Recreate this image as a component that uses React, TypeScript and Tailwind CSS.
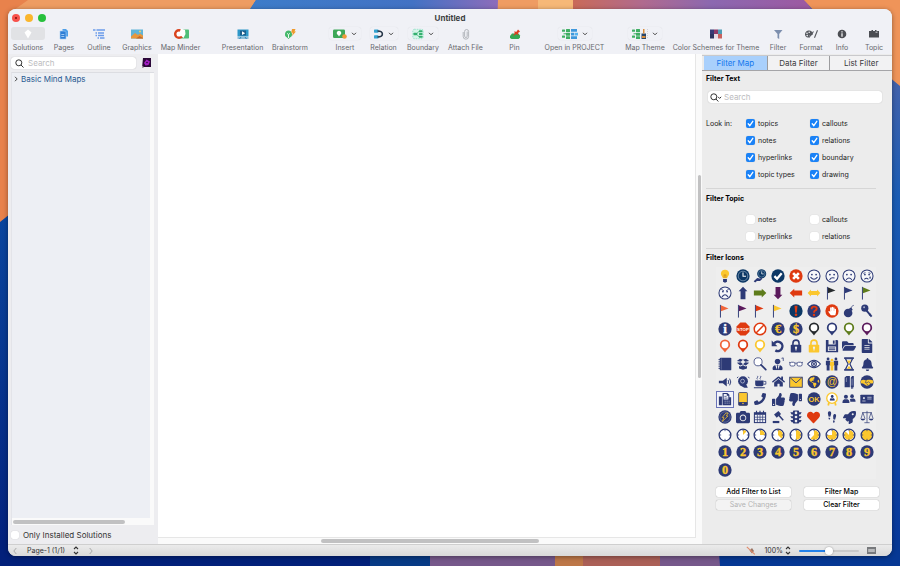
import React from "react";
import type { ReactNode } from "react";
import {
  FaHandPaper, FaFolderOpen, FaFileAlt, FaUserTie, FaBell, FaHome,
  FaGlobeAmericas, FaPhoneAlt, FaThumbsUp, FaThumbsDown,
  FaCamera, FaHeart, FaRocket, FaUser,
} from "react-icons/fa";

const NAVY = "#2d3a76";
const DEEP = "#0b3765";
const RED = "#df3a10";
const YELLOW = "#fbc72e";
const GREEN = "#5e7c1b";
const PURPLE = "#5b1a5c";
const ORANGE = "#f1653a";
const BLACK = "#262a2e";

function Glyph({ children }: { children: ReactNode }) {
  return (
    <svg viewBox="0 0 16 16" className="size-[14px]" fill="none" aria-hidden="true">
      {children}
    </svg>
  );
}

function Disc({ fill = NAVY, children }: { fill?: string; children: ReactNode }) {
  return (
    <Glyph>
      <circle cx="8" cy="8" r="7.6" fill={fill} />
      {children}
    </Glyph>
  );
}

function DiscText({ text, color = YELLOW, fill = NAVY, size = 13 }: { text: string; color?: string; fill?: string; size?: number }) {
  return (
    <Disc fill={fill}>
      <text x="8" y={8 + size * 0.34} textAnchor="middle" fontSize={size} fontWeight="700" fill={color} stroke={color} strokeWidth=".4" fontFamily="'Liberation Serif', serif">
        {text}
      </text>
    </Disc>
  );
}

function Face({ mouth, brows, tear = false }: { mouth: string; brows?: string; tear?: boolean }) {
  return (
    <Glyph>
      <circle cx="8" cy="8" r="6.900" fill="#f6f7fa" stroke={NAVY} strokeWidth="1.200" />
      <circle cx="5.600" cy="6.300" r="1" fill={NAVY} />
      <circle cx="10.400" cy="6.300" r="1" fill={NAVY} />
      <path d={mouth} stroke={NAVY} strokeWidth="1.200" strokeLinecap="round" />
      {brows && <path d={brows} stroke={NAVY} strokeWidth=".9" />}
      {tear && <path d="M11.500 8c1 1.500 1.300 3 0 3s-1-1.500 0-3z" fill={NAVY} />}
    </Glyph>
  );
}

function Flag({ color }: { color: string }) {
  return (
    <Glyph>
      <path d="M2.800 1v14.500" stroke={NAVY} strokeWidth="1.100" />
      <path d="M3.300 1.300 12 5 3.300 8.400z" fill={color} />
    </Glyph>
  );
}

function Pin({ color }: { color: string }) {
  return (
    <Glyph>
      <path d="M8 .6a5.900 5.900 0 0 0-5.900 5.900c0 3.700 3.900 5.200 5.900 9 2-3.800 5.900-5.300 5.900-9A5.900 5.900 0 0 0 8 .6z" fill={color} />
      <circle cx="8" cy="6.600" r="3.900" fill="#fff" />
    </Glyph>
  );
}

function Arrow({ color, angle }: { color: string; angle: number }) {
  return (
    <Glyph>
      <path d="M8 .8 13 6h-2.200v9H5.200V6H3z" fill={color} transform={`rotate(${angle} 8 8)`} />
    </Glyph>
  );
}

function Padlock({ color }: { color: string }) {
  return (
    <Glyph>
      <path d="M4.500 7V4.800a3.500 3.500 0 0 1 7 0V7" stroke={color} strokeWidth="1.800" />
      <rect x="2" y="6.500" width="12" height="9" rx=".8" fill={color} />
      <circle cx="8" cy="10" r="1.300" fill="#eee" />
      <path d="M7.400 10h1.200v3.200H7.400z" fill="#eee" />
    </Glyph>
  );
}

function Progress({ part }: { part: number }) {
  const a = part * 2 * Math.PI;
  const x = 8 + 5.6 * Math.sin(a);
  const y = 8 - 5.6 * Math.cos(a);
  return (
    <Glyph>
      <circle cx="8" cy="8" r="6.700" fill={part >= 1 ? YELLOW : "#fff"} stroke={NAVY} strokeWidth="1.500" />
      {part > 0 && part < 1 && <path d={`M8 8V2.400A5.600 5.600 0 ${part > 0.5 ? 1 : 0} 1 ${x} ${y}z`} fill={YELLOW} />}
      <path d="M8 2v1.600M8 12.400v1.600M2 8h1.600M12.400 8h1.600" stroke={NAVY} strokeWidth=".9" />
    </Glyph>
  );
}

function Clock() {
  return (
    <>
      <circle cx="8" cy="8" r="7.600" fill={DEEP} />
      <circle cx="8" cy="8" r="5.500" stroke="#9fb6cc" strokeWidth=".7" />
      <path d="M8 4v4.300h3.400" stroke="#fff" strokeWidth="1.200" />
    </>
  );
}

const filterIcons: [string, ReactNode][] = [
  ["Idea", <Glyph><path d="M8 .8a4.600 4.600 0 0 0-4.700 4.600c0 2.300 2 3.200 2.400 5.200h4.600c.4-2 2.400-2.900 2.400-5.200A4.600 4.600 0 0 0 8 .8z" fill={YELLOW} /><path d="M7 10.300V6.500L8 7.300l1-.8v3.800" stroke="#c27a14" strokeWidth=".7" /><path d="M5.800 11.300h4.400v2.700L9 15.400H7L5.800 14z" fill={NAVY} /></Glyph>],
  ["Clock", <Glyph><Clock /></Glyph>],
  ["Deadline", <Glyph><g transform="translate(4.500 0) scale(.68)"><Clock /></g><path d="m.8 14 4-3.800 3 .6 2.200-.8.500 1.500-2.500 2.300H4.500L2.500 15.500z" fill={NAVY} /></Glyph>],
  ["Done", <Disc fill={DEEP}><path d="m3.900 8.200 3 3 5.300-6.300" stroke="#fff" strokeWidth="2.600" /></Disc>],
  ["Cancelled", <Disc fill={RED}><path d="m4.700 4.700 6.600 6.600M11.300 4.700l-6.600 6.600" stroke="#fff" strokeWidth="3" /></Disc>],
  ["Happy", <Face mouth="M4.300 9.500q3.700 4.200 7.400 0" />],
  ["Doubtful", <Face mouth="M5.500 12q1.500-2.600 5-1.800" />],
  ["Sad", <Face mouth="M5 12q3-3.400 6 0" />],
  ["Tearful", <Face mouth="M5.300 11.500q2-1.800 4 0" brows="m3.800 5 2.500-.8M9.700 4.200l2.500.8" tear />],
  ["Angry", <Face mouth="M4.800 12.200q3.200-4.200 6.400 0" brows="m3.700 3.700 3 1.700M12.300 3.700l-3 1.700" />],
  ["Arrow up", <Arrow color={NAVY} angle={0} />],
  ["Arrow right", <Arrow color={GREEN} angle={90} />],
  ["Arrow down", <Arrow color={PURPLE} angle={180} />],
  ["Arrow left", <Arrow color={RED} angle={270} />],
  ["Arrow both ways", <Glyph><path d="M.8 8 4.500 4v1.600h7V4L15.200 8l-3.700 4v-1.600h-7V12z" fill={YELLOW} /></Glyph>],
  ["Black flag", <Flag color={BLACK} />],
  ["Blue flag", <Flag color={NAVY} />],
  ["Green flag", <Flag color={GREEN} />],
  ["Orange flag", <Flag color={ORANGE} />],
  ["Purple flag", <Flag color={PURPLE} />],
  ["Red flag", <Flag color={RED} />],
  ["Yellow flag", <Flag color={YELLOW} />],
  ["Important", <Disc fill={DEEP}><path d="M6.300 2h3.400L8.900 10H7.100z" fill={RED} /><circle cx="8" cy="12.300" r="1.500" fill={RED} /></Disc>],
  ["Question", <Disc><path d="M5.300 6C5 3 7 3 8 3c4.500 0 3.300 3.800 1.200 4.600Q8 8 8 10" stroke={RED} strokeWidth="2.200" /><circle cx="8" cy="12.600" r="1.400" fill={RED} /></Disc>],
  ["Halt", <Disc fill={RED}><FaHandPaper x="3.200" y="3" size={10} color="#fff" /></Disc>],
  ["Risk", <Glyph><circle cx="7" cy="10.300" r="4.900" fill={NAVY} /><path d="m8 5.200 2.500-1.200 1.700 2.500-1.200 1.500z" fill={NAVY} /><path d="M10.500 5c0-2 1-2.800 3-3.500" stroke={NAVY} strokeWidth=".8" /></Glyph>],
  ["Key", <Glyph><circle cx="5.500" cy="4.800" r="4.100" fill={NAVY} /><circle cx="4.700" cy="3.800" r="1.100" fill="#aab0ca" /><path d="m7.500 7.500 5.800 7" stroke={NAVY} strokeWidth="2.200" /><path d="m10.500 13 2-1.800" stroke={NAVY} strokeWidth="1.300" /></Glyph>],
  ["Info", <DiscText text="i" color="#fff" size={15} />],
  ["Stop", <Glyph><path d="M5 .6h6L15.400 5v6L11 15.400H5L.6 11V5z" fill={RED} /><text x="8" y="9.900" textAnchor="middle" fontSize="5" fontWeight="700" fill="#fff" fontFamily="'Liberation Sans', sans-serif">STOP</text></Glyph>],
  ["Forbidden", <Glyph><circle cx="8" cy="8" r="6.600" fill="#fff" stroke={RED} strokeWidth="1.700" /><path d="m3.500 12.500 9-9" stroke={RED} strokeWidth="1.700" /></Glyph>],
  ["Euro", <DiscText text="€" size={14} />],
  ["Dollar", <DiscText text="$" size={14} />],
  ["Black pin", <Pin color={BLACK} />],
  ["Blue pin", <Pin color={NAVY} />],
  ["Green pin", <Pin color={GREEN} />],
  ["Purple pin", <Pin color={PURPLE} />],
  ["Orange pin", <Pin color={ORANGE} />],
  ["Red pin", <Pin color={RED} />],
  ["Yellow pin", <Pin color={YELLOW} />],
  ["Repeat", <Glyph><path d="M3.500 5.300a5.300 5.300 0 1 1 1.500 7.700" stroke={NAVY} strokeWidth="2.800" /><path d="M.8 1.800v6.600h6.600z" fill={NAVY} /></Glyph>],
  ["Locked", <Padlock color={NAVY} />],
  ["Restricted", <Padlock color={YELLOW} />],
  ["Save", <Glyph><path d="M1 1h13l1 1v13H1z" fill={NAVY} /><path d="M4 1h8v5.300H4zM3.300 8.700h9.400v5H3.300z" fill="#eee" /><path d="M9 1.800h2v3.500H9zM4.300 9.800h7.400v1H4.300zM4.300 11.800h7.400v1H4.300z" fill={NAVY} /></Glyph>],
  ["Folder", <FaFolderOpen size={14} color={NAVY} />],
  ["Document", <FaFileAlt size={14} color={NAVY} />],
  ["Notebook", <Glyph><rect x="2" y=".8" width="13.200" height="14.400" rx="1" fill={NAVY} /><path d="M.6 3h3M.6 5.500h3M.6 8h3M.6 10.500h3M.6 13h3" stroke={NAVY} strokeWidth="1.100" /><path d="M3.800 1.500v13" stroke="#8f97b8" strokeWidth=".5" /></Glyph>],
  ["Package", <Glyph><path d="m4.500 2 3.500 1-2.500 2.500L1 4.500zM11.500 2 8 3l2.500 2.500L15 4.500zM1 6.500l4.500-.4L8 8.300 4.800 9.700zM15 6.500l-4.500-.4L8 8.300l3.200 1.400zM3.500 10.300l1.700.5L8 9.500l2.800 1.300 1.700-.5v2.700L8 14.500 3.500 13z" fill={NAVY} /></Glyph>],
  ["Search", <Glyph><circle cx="5.800" cy="5.500" r="4.600" fill="#fff" stroke={NAVY} strokeWidth=".9" /><path d="m9.200 9 5.400 5.400" stroke={NAVY} strokeWidth="2" strokeLinecap="round" /></Glyph>],
  ["Manager", <Glyph><FaUserTie x="1" y="2" size={13} color={NAVY} /><path d="M12 1.500 14 1v3.500" stroke={NAVY} strokeWidth=".9" /></Glyph>],
  ["Glasses", <Glyph><rect x="1" y="6" width="5.800" height="4.300" rx="1.700" stroke={NAVY} strokeWidth=".9" fill="#fff" /><rect x="9.200" y="6" width="5.800" height="4.300" rx="1.700" stroke={NAVY} strokeWidth=".9" fill="#fff" /><path d="M6.800 7.200q1.200-.8 2.400 0M1 7 .3 5.500M15 7l.7-1.500" stroke={NAVY} strokeWidth=".8" /></Glyph>],
  ["Watch", <Glyph><path d="M.6 8Q8-.5 15.400 8 8 16.500.6 8z" fill="#fff" stroke={NAVY} strokeWidth="1.200" /><circle cx="8" cy="8" r="2.700" fill="#fff" stroke={NAVY} strokeWidth="1.300" /><circle cx="8" cy="8" r="1.200" fill={NAVY} /></Glyph>],
  ["Team", <Glyph><g fill={NAVY}><circle cx="3.500" cy="2.300" r="1.600" /><path d="M1 4.300h5v5H5.200v6H1.900v-6H1z" /><circle cx="12.500" cy="2.300" r="1.600" /><path d="M10 4.300h5v5h-.9v6h-3.300v-6H10z" /></g><g fill={YELLOW}><circle cx="8" cy="3.600" r="1.500" /><path d="M5.600 5.500h4.800v4.500h-.9v5.300H6.500V10h-.9z" /></g></Glyph>],
  ["Waiting", <Glyph><path d="M2.500 1.200h11M2.500 14.800h11" stroke={NAVY} strokeWidth="1.900" /><path d="M4 2h8L9 8l3 6H4l3-6z" fill="#fff" stroke={NAVY} strokeWidth="1.400" /><path d="M5.600 4h4.800L8 8zM8 10l2.400 3.300H5.600z" fill={YELLOW} /></Glyph>],
  ["Bell", <FaBell size={13} color={NAVY} />],
  ["Announcement", <Glyph><path d="M1 6.500h4.500L10 3v10L5.500 9.500H1z" fill={NAVY} /><path d="M11.500 5.700q1.500 2.300 0 4.600M13.300 4.200q2.600 3.800 0 7.600" stroke={NAVY} strokeWidth="1.100" /></Glyph>],
  ["Alarm", <Glyph><circle cx="8" cy="7" r="5.600" fill={NAVY} /><circle cx="7.500" cy="7" r="2.200" stroke="#cfd3e2" strokeWidth=".8" /><path d="M4 11.500h8l1.500 3h-4" fill={NAVY} /><path d="M1.200 3.500 2.500 2M14 2l1.200 1.700" stroke={NAVY} /></Glyph>],
  ["Break", <Glyph><path d="M2.500 6.300h9.500v4.500a2 2 0 0 1-2 2H4.500a2 2 0 0 1-2-2zM1 14h12.500v1.100H1z" fill={NAVY} /><path d="M12 7.300h2.700v3.200H12M5 5q-1-1 0-2t0-2M8.500 5q-1-1 0-2t0-2" stroke={NAVY} strokeWidth=".9" /></Glyph>],
  ["Home", <FaHome size={13} color={NAVY} />],
  ["Mail", <Glyph><rect x=".8" y="2.500" width="14.400" height="11.500" fill={YELLOW} stroke={NAVY} strokeWidth="1" /><path d="m1.300 3 6.700 6 6.700-6" stroke={NAVY} strokeWidth="1" /></Glyph>],
  ["World", <Glyph><circle cx="8" cy="8" r="7.400" fill={YELLOW} /><FaGlobeAmericas x=".4" y=".4" size={15.200} color={NAVY} /></Glyph>],
  ["Address", <Disc><text x="8" y="11.500" textAnchor="middle" fontSize="12" fill={YELLOW} fontFamily="'Liberation Sans', sans-serif">@</text></Disc>],
  ["Books", <Glyph><path d="M3 2.800 5 1h4v13H3zM10 3l1.500-2h2V14H10z" fill={NAVY} /><path d="M5 3v5M11.500 4v8" stroke="#cfd3e2" strokeWidth=".6" /><path d="M10.300 14v2l1.200-1 1.200 1v-2z" fill={NAVY} /></Glyph>],
  ["Agreement", <Disc><path d="m.8 6.200 3.200-.7 3 .7 1.800-.7L12 5.500l3.200.7-.3 3.300-2.200.3L9.300 12 7.500 12.300 3.500 9.800l-2.500-.3z" fill={YELLOW} /><path d="m7 6.500-1 2.200 2 .3 1.500-1.300 3 2.300M7.500 10l1.500 1.200" stroke={NAVY} strokeWidth=".7" /></Disc>],
  ["Fax", <Glyph><path d="M1 5h3.500v10H1zM5.200 1h5.600L13 3.200V6h2v9H5.200z" fill={NAVY} /><path d="M6.500 2.300h3.500v2h1.800v4.400H6.500z" fill="#f3f4fa" /><path d="M7.300 5h2.500M7.300 7h3.600M7.500 10.500h1.300M9.800 10.500h1.300M12 10.500h1.300M7.500 12.700h1.300M9.800 12.700h1.300M12 12.700h1.300" stroke={NAVY} strokeWidth=".8" /><path d="M7.500 10.500h5.800M7.500 12.700h5.800" stroke="#cfd3e2" strokeWidth=".9" strokeDasharray="1.300 1" /></Glyph>],
  ["Mobile", <Glyph><rect x="3" y=".6" width="10" height="14.800" rx="1" fill={YELLOW} stroke={NAVY} strokeWidth=".9" /><path d="M3 11.500h10V15H3z" fill={NAVY} /><circle cx="8" cy="13.200" r=".9" fill={YELLOW} /></Glyph>],
  ["Phone", <FaPhoneAlt size={12} color={NAVY} className="-scale-x-100" />],
  ["Thumbs up", <FaThumbsUp size={13} color={NAVY} />],
  ["Thumbs down", <FaThumbsDown size={13} color={NAVY} className="-scale-x-100" />],
  ["Approved", <Disc><text x="8" y="10.900" textAnchor="middle" fontSize="8.500" fontWeight="700" fill={YELLOW} fontFamily="'Liberation Sans', sans-serif">OK</text></Disc>],
  ["Award", <Glyph><circle cx="8" cy="7" r="6" fill="#fff" stroke={YELLOW} strokeWidth="1.500" /><FaUser x="5" y="3.500" size={6.500} color={NAVY} /><path d="m4.500 12-.8 3.500M11.500 12l.8 3.500" stroke={YELLOW} strokeWidth="2" /></Glyph>],
  ["People", <Glyph><g fill={NAVY}><circle cx="4.500" cy="5.300" r="2.300" /><path d="M.5 12.500c0-3.800 1.500-4.300 4-4.300s4 .5 4 4.300z" /><circle cx="11.500" cy="4.800" r="2.100" /><path d="M9 8.200q1-.8 2.500-.8c2.500 0 4 .5 4 3.800H9.500q0-2-.5-3z" /></g></Glyph>],
  ["ID card", <Glyph><rect x=".4" y="3" width="15.200" height="10" rx=".8" fill={NAVY} /><circle cx="4.500" cy="7" r="1.200" fill="#cfd3e2" /><path d="M2.600 10.300h3.800M8.300 6h5M8.300 8h5" stroke="#cfd3e2" strokeWidth=".9" /></Glyph>],
  ["Energy", <Disc><circle cx="8" cy="8" r="5.900" stroke="#8f97b8" strokeWidth=".5" /><path d="M9 3.500h2.500L9.500 6.800h2L5 13l1.800-4.500H4.800z" stroke={YELLOW} strokeWidth=".8" /></Disc>],
  ["Camera", <FaCamera size={14} color={NAVY} />],
  ["Calendar", <Glyph><path d="M1 2.500h14V15H1z" fill={NAVY} /><path d="M4 .8v3M8 .8v3M12 .8v3" stroke={NAVY} strokeWidth="1.300" /><path d="M2.200 5.500h11.600v8.300H2.200z" fill="#f1f2f6" /><path d="M2 8.200h12M2 11h12M5 5.500V14M8 5.500V14M11 5.500V14" stroke={NAVY} strokeWidth=".8" /></Glyph>],
  ["Decision", <Glyph><path d="M3.500 5.200 8.500 1l3 3.700-5 4.200z" fill={NAVY} /><path d="m8.500 5.500 5.500 6.300" stroke={NAVY} strokeWidth="1.700" /><path d="M2 12.500h7.500V15H2z" fill={NAVY} /></Glyph>],
  ["Traffic light", <Glyph><rect x="4.500" y=".6" width="7" height="14.800" rx="1" fill={NAVY} /><path d="M1.500 2.500H14.500L13 5H3zM1.500 7H14.500L13 9.500H3zM1.500 11.500H14.500L13 14H3z" fill={NAVY} /><g fill="#eee"><circle cx="8" cy="3.300" r="1.500" /><circle cx="8" cy="8" r="1.500" /><circle cx="8" cy="12.700" r="1.500" /></g></Glyph>],
  ["Favourite", <FaHeart size={13} color={RED} />],
  ["Steps", <Glyph><path d="M5 1.500c2 0 2.500 2 1.800 4L6 7.800 4 7.500 3.300 4c0-1.500.6-2.500 1.700-2.500zM4.200 8.700l1.700.3c0 1.200-.3 1.800-1 1.800-.8 0-1-.8-.7-2.100zM11.300 4.500c1.300.4 1.700 1.500 1.300 3L11.500 11 9.500 10.500 9.300 7.500c0-2 .9-3.400 2-3zM9.400 11.700l1.800.5c-.2 1.700-.6 2.500-1.300 2.300-.8-.2-.8-1.200-.5-2.800z" fill={NAVY} /></Glyph>],
  ["Launch", <FaRocket size={13} color={NAVY} />],
  ["Balance", <Glyph><path d="M8 1v13.500M5 14.500h6M2.500 3h11M3.300 3 1 10M3.300 3l2.400 7M12.700 3l-2.400 7M12.700 3 15 10" stroke={NAVY} strokeWidth=".8" /><path d="M.8 10h5a2.500 2 0 0 1-5 0zM10.200 10h5a2.500 2 0 0 1-5 0z" fill={NAVY} /></Glyph>],
  ...[0, 1, 2, 3, 4, 5, 6, 7, 8].map((n): [string, ReactNode] => [`Progress ${n} of 8`, <Progress part={n / 8} />]),
  ...["1", "2", "3", "4", "5", "6", "7", "8", "9", "0"].map((n): [string, ReactNode] => [`Priority ${n}`, <DiscText text={n} size={14} />]),
];

function ToolGlyph({ w = 16, children }: { w?: number; children: ReactNode }) {
  return (
    <svg viewBox={`0 0 ${w} 12`} width={w} height={12} fill="none" aria-hidden="true">
      {children}
    </svg>
  );
}

function Chevron() {
  return (
    <svg viewBox="0 0 6 4" className="h-1 w-[6px]" fill="none" stroke="#444" strokeWidth="1" aria-hidden="true">
      <path d="m1 .8 2 2 2-2" />
    </svg>
  );
}

const mapBlocks = (
  <>
    <g fill="#3fae63">
      <rect x="0" y="1.500" width="3" height="2.300" rx=".5" /><rect x="0" y="7.500" width="3" height="2.300" rx=".5" />
      <rect x="4" y="1" width="4" height="3" rx=".5" /><rect x="4" y="4.700" width="4" height="3" rx=".5" /><rect x="4" y="8.300" width="4" height="2.700" rx=".5" />
    </g>
    <path d="M1.500 5.800H5" stroke="#3fae63" />
  </>
);

const tools: { label: string; basis: string; gap?: string; active?: boolean; menu?: boolean; icon: ReactNode }[] = [
  { label: "Solutions", basis: "basis-[36px]", active: true, icon: <ToolGlyph w={12}><path d="m6 1.500 3.500 3L6 10.500l-3.500-6z" fill="#fff" /></ToolGlyph> },
  { label: "Pages", basis: "basis-[36px]", icon: <ToolGlyph w={10}><path d="M3.500 1H7l2 2v5.500H3.500z" fill="#4f9fe8" /><path d="M1 3h4.500l1.500 1.500V11H1z" fill="#2f7fd6" stroke="#a9d2f7" strokeWidth=".6" /><path d="M2.300 6.500h3M2.300 8.500h3" stroke="#cfe6fb" strokeWidth=".7" /></ToolGlyph> },
  { label: "Outline", basis: "basis-[34px]", icon: <ToolGlyph w={14}><g stroke="#6b9cea" strokeWidth="1.500"><path d="M1 2h2.500M4.500 2h8.500M3.500 5h1.500M6 5h6M3.500 7.500h1.500M6 7.500h6M5.500 10h1.500M8 10h4.500" /></g></ToolGlyph> },
  { label: "Graphics", basis: "basis-[42px]", icon: <ToolGlyph w={12}><rect y="1.500" width="12" height="9" fill="#5fb4d8" /><path d="M0 8.500 4 5l3 2L9 5.500l3 2v3H0z" fill="#e8973c" /><path d="m5 10.500 3.500-2.500 3.500 2v.5z" fill="#c46a2b" /><circle cx="9" cy="3.600" r="1" fill="#f6d069" /></ToolGlyph> },
  { label: "Map Minder", basis: "basis-[45px]", icon: <ToolGlyph w={16}><rect x="7" y="1.500" width="9" height="9" rx=".8" fill="#4fbf78" /><circle cx="6" cy="6" r="3.800" fill="#fff" stroke="#d9431e" strokeWidth="2.500" /><path d="m6 6 2-5.500 4 1.500.5 4-2 4z" fill="#fff" /></ToolGlyph> },
  { label: "Presentation", basis: "basis-[43px]", gap: "basis-[18px]", icon: <ToolGlyph w={12}><path d="M.5 1.500h11v7H.5z" fill="#2d97c8" /><path d="M3 2.500h6v5H3z" fill="#1d5f8c" /><path d="m5 3.300 3.200 1.900L5 7z" fill="#fff" /><path d="m4 9-1.500 2M8 9l1.500 2M.5 10h11" stroke="#2d87b8" /></ToolGlyph> },
  { label: "Brainstorm", basis: "basis-[52px]", icon: <ToolGlyph w={12}><path d="M4.500 2.500A3.700 3.700 0 0 0 3 9.500L4.500 11 6 9.500a3.700 3.700 0 0 0-1.500-7z" fill="#45b96b" /><path d="M4.500 10V6.500M3 5.300l1.500 1.400L6 5.300" stroke="#fff" strokeWidth=".9" /><path d="M8 1h3.500L10.500 3.500H12L8 8l.8-3.300H7.200z" fill="#f09a2b" /></ToolGlyph> },
  { label: "Insert", basis: "basis-[38px]", gap: "basis-[10px]", menu: true, icon: <ToolGlyph w={14}><rect y="1.500" width="12" height="8.500" rx="1.200" fill="#3da858" /><path d="M6 2.800a2.200 2.200 0 0 0-1 4.200l1 1.500 1-1.500a2.200 2.200 0 0 0-1-4.200z" fill="#fff" /><circle cx="11.500" cy="8.500" r="2.300" fill="#f09a3a" /></ToolGlyph> },
  { label: "Relation", basis: "basis-[39px]", menu: true, icon: <ToolGlyph w={10}><rect x="0" y="1.500" width="4.500" height="3.200" rx=".6" fill="#34a3d0" /><rect x="0" y="7.300" width="4.500" height="3.200" rx=".6" fill="#34a3d0" /><path d="M3.500 3c6.500 0 6.500 6 0 6" stroke="#28384a" strokeWidth="1.600" /></ToolGlyph> },
  { label: "Boundary", basis: "basis-[40px]", menu: true, icon: <ToolGlyph w={12}><rect x=".8" y="1.300" width="10.400" height="9.400" rx="1.500" fill="#d6f5e9" stroke="#7fdcc0" strokeWidth=".7" strokeDasharray="1.500 1" /><g fill="#35b070"><rect x="1.500" y="4.800" width="3.500" height="2.400" rx=".5" /><rect x="7" y="2.200" width="3.500" height="2" rx=".5" /><rect x="7" y="5" width="3.500" height="2" rx=".5" /><rect x="7" y="7.800" width="3.500" height="2" rx=".5" /></g><path d="M7 3.200 4.500 6 7 8.800" stroke="#35b070" strokeWidth=".8" /></ToolGlyph> },
  { label: "Attach File", basis: "basis-[45px]", icon: <ToolGlyph w={10}><path d="M6.200 3.500v4.700a1.300 1.300 0 0 1-2.600 0V3.500a2 2 0 0 1 4 0v5a2.700 2.700 0 0 1-5.400 0V4" stroke="#a5a8ad" strokeWidth=".8" /></ToolGlyph> },
  { label: "Pin", basis: "basis-[53px]", icon: <ToolGlyph w={12}><path d="M1 8 3 5.500h6.500L11 7.500v2.300L9.500 11h-7L1 10z" fill="#35a853" /><path d="m5 3.500 2.500.3L9 1.500l2 2-2 1.600.3 2.400L7.500 6 4 8l1.800-3z" fill="#dc3d20" /></ToolGlyph> },
  { label: "Open in PROJECT", basis: "basis-[67px]", menu: true, icon: <ToolGlyph w={16}>{mapBlocks}<path d="M9 1h6v2.800H9zM9 4.700h3v2.800H9zM9 8.300h6V11H9z" fill="#3f98dc" /><path d="M12.500 4.700H16v2.800h-3.500z" fill="#58b4ee" /></ToolGlyph> },
  { label: "Map Theme", basis: "basis-[58px]", gap: "basis-[8px]", menu: true, icon: <ToolGlyph w={16}>{mapBlocks}<path d="M9.500 5.500h4.500V11H9.500z" fill="#28476b" /><path d="M11 1h1.500v4.500H11zM10 8h3.500v2H10z" fill="#d98c3a" /><path d="M15.500 1v10" stroke="#b8bcc4" strokeWidth=".6" strokeDasharray="1 1" /></ToolGlyph> },
  { label: "Color Schemes for Theme", basis: "basis-[84px]", icon: <ToolGlyph w={12}><path d="M0 1.500h4v4.500H0z" fill="#353a75" /><path d="M4 1.500h4v4.500H4z" fill="#8e3a68" /><path d="M8 1.500h4v4.500H8z" fill="#4d9cb5" /><path d="M0 6h4v4.500H0z" fill="#2d3560" /><path d="M4 6h4v4.500H4z" fill="#e5dce6" /><path d="M8 6h4v4.500H8z" fill="#c9615c" /></ToolGlyph> },
  { label: "Filter", basis: "basis-[40px]", icon: <ToolGlyph w={10}><path d="M1 2h8.500L6.200 6v5l-1.700-1V6z" fill="#7d8fae" /></ToolGlyph> },
  { label: "Format", basis: "basis-[26px]", icon: <ToolGlyph w={14}><path d="M5 2.500C2 2.500 1 5 1 6.500S2.500 10 4.500 9.500c1-.3 0-1.500 1.200-2C7 7 8.500 7.700 8.800 6.300 9 4.500 7.500 2.500 5 2.500z" fill="#55585e" /><g fill="#f0f1f6"><circle cx="3" cy="5.300" r=".8" /><circle cx="5.200" cy="4.300" r=".8" /><circle cx="3.200" cy="7.600" r=".8" /></g><path d="m10.500 9.800 3-7.500M5 9.500 9.500 3.500" stroke="#55585e" strokeWidth="1.100" /></ToolGlyph> },
  { label: "Info", basis: "basis-[36px]", icon: <ToolGlyph w={10}><circle cx="5" cy="6" r="4.300" fill="#4c4e53" /><path d="M5 5.300v3.500M5 3.300v1.200" stroke="#fff" strokeWidth="1.200" /></ToolGlyph> },
  { label: "Topic", basis: "basis-[28px]", icon: <ToolGlyph w={10}><path d="M0 3h2.500V2h1.500v1h2V2h1.500v1H10v6.500H0z" fill="#4c4e53" /><path d="M6.500 4.200h2" stroke="#f0f1f6" strokeWidth=".8" /></ToolGlyph> },
];

function Wallpaper() {
  return (
    <svg viewBox="0 0 900 566" preserveAspectRatio="none" className="absolute inset-0 size-full" aria-hidden="true">
      <defs>
        <linearGradient id="top" x1="250" x2="500" gradientUnits="userSpaceOnUse"><stop offset="0" stopColor="#3d7cc9" /><stop offset=".65" stopColor="#4272c4" /><stop offset="1" stopColor="#8f6cba" /></linearGradient>
        <linearGradient id="dusk" x1="573" x2="805" gradientUnits="userSpaceOnUse"><stop offset="0" stopColor="#c96a58" /><stop offset=".3" stopColor="#b06a8e" /><stop offset=".6" stopColor="#8b68b0" /><stop offset="1" stopColor="#9c5aa2" /></linearGradient>
        <linearGradient id="side" x1="0" x2="0" y1="0" y2="1"><stop offset="0" stopColor="#1a5db0" /><stop offset=".35" stopColor="#0b48a0" /><stop offset="1" stopColor="#03207c" /></linearGradient>
        <linearGradient id="right" x1="0" x2="0" y1="0" y2="1"><stop offset="0" stopColor="#5f67a6" /><stop offset=".35" stopColor="#1a5cb4" /><stop offset="1" stopColor="#06369a" /></linearGradient>
      </defs>
      <path d="M0 0h900v566H0z" fill="url(#side)" />
      <path d="M450 0h450v566H450z" fill="url(#right)" />
      <path d="M0 0h256l-30 40L0 222z" fill="#e8824c" />
      <path d="M28 0h228l-6 10H14z" fill="#ee9c62" />
      <path d="M256 0h242v30H236z" fill="url(#top)" />
      <path d="M498 0h40v30h-41z" fill="#ef9c62" />
      <path d="M538 0h35v30h-35z" fill="#f6b877" />
      <path d="M573 0h232l20 30H573z" fill="url(#dusk)" />
      <path d="M804 0h96v86L830 28z" fill="#ef9459" />
      <path d="M0 540h370v26H0z" fill="#02207a" />
      <path d="M370 540h60v26h-60z" fill="#073a85" />
      <path d="M430 540h290v26H430z" fill="#76588b" />
      <path d="M555 540h28v26h-28z" fill="#bd7748" />
      <path d="M583 540h77v26h-77z" fill="#ab6057" />
      <path d="M718 540h182v26H720z" fill="#063894" />
    </svg>
  );
}

function Check({ label, checked = false }: { label: string; checked?: boolean }) {
  return (
    <label className="flex h-[17px] items-center gap-[3px] text-[7px] text-[#222]">
      <span className="grid place-items-center">
        <input type="checkbox" defaultChecked={checked} className="peer size-[9px] appearance-none rounded-[2px] bg-white shadow-[0_0_1px_rgba(0,0,0,0.2)] [grid-area:1/1] checked:bg-[#1a82f7]" />
        <svg viewBox="0 0 9 9" className="pointer-events-none invisible size-[9px] [grid-area:1/1] peer-checked:visible" fill="none" stroke="#fff" strokeWidth="1.300" strokeLinecap="round" aria-hidden="true">
          <path d="m2.200 4.800 1.600 1.800 3-4.300" />
        </svg>
      </span>
      {label}
    </label>
  );
}

function Stepper() {
  return (
    <svg viewBox="0 0 6 9" className="h-[9px] w-[6px]" fill="none" stroke="#333" strokeWidth="1.100" aria-hidden="true">
      <path d="m1 3 2-2 2 2M1 6l2 2 2-2" />
    </svg>
  );
}

function PanelButton({ children, disabled = false }: { children: ReactNode; disabled?: boolean }) {
  return (
    <button disabled={disabled} className="h-[10px] rounded-[2px] bg-white text-[7px] leading-[10px] font-medium text-black shadow-[0_0_1px_rgba(0,0,0,0.4)] disabled:bg-[#f3f3f3] disabled:font-normal disabled:text-[#b4b4b4]">
      {children}
    </button>
  );
}

export default function App() {
  return (
    <div className="relative isolate flex min-h-screen flex-col overflow-hidden px-2 pt-[9px] pb-[10px] font-['Inter','Liberation_Sans',sans-serif] text-[7px] leading-[10px]">
      <div className="absolute inset-0 -z-10"><Wallpaper /></div>
      <main className="flex flex-1 flex-col overflow-hidden rounded-lg bg-[#ececec] shadow-[0_1px_5px_rgba(0,0,0,0.4)]">
        <header className="bg-[#f0f1f6]">
          <div className="grid h-[17px] grid-cols-3 items-center px-1">
            <div className="flex gap-[5px]">
              <button aria-label="Close" className="grid size-2 place-items-center rounded-full bg-[#f8514b]"><span className="size-[2px] rounded-full bg-[#7a0d08]" /></button>
              <button aria-label="Minimize" className="size-2 rounded-full bg-[#fab62d]" />
              <button aria-label="Zoom" className="size-2 rounded-full bg-[#27c03c]" />
            </div>
            <h1 className="text-center text-[8px] font-bold text-[#3d3e42]">Untitled</h1>
          </div>
          <nav className="flex h-7 pr-1 pl-[2px] text-[#66676c]">
            {tools.map((t) => (
              <React.Fragment key={t.label}>
                {t.gap && <span className={`shrink-0 grow ${t.gap}`} />}
                <button className={`flex min-w-0 shrink-0 grow flex-col items-center whitespace-nowrap ${t.basis}`}>
                  <span className={`mt-px flex h-[13px] shrink-0 items-center justify-center gap-1 rounded-[3px] ${t.active ? "w-[34px] bg-[#e1e2e5]" : ""} ${t.menu ? "px-1 shadow-[0_0_1px_rgba(0,0,0,0.12)]" : ""}`}>
                    {t.icon}
                    {t.menu && <Chevron />}
                  </span>
                  <span className="mt-[3px]">{t.label}</span>
                </button>
              </React.Fragment>
            ))}
          </nav>
        </header>

        <div className="flex flex-1">
          <aside className="flex w-[150px] flex-col bg-[#ededf0] pl-[3px]">
            <div className="flex h-[18px] items-center gap-[6px]">
              <label className="flex h-3 w-[125px] items-center gap-1 rounded-[3px] bg-white px-1 shadow-[0_0_1px_rgba(0,0,0,0.3)]">
                <svg viewBox="0 0 9 9" className="size-[9px] shrink-0" fill="none" stroke="#333" strokeWidth="1" aria-hidden="true"><circle cx="3.800" cy="3.800" r="3" /><path d="m6 6 2.500 2.500" /></svg>
                <input aria-label="Search solutions" placeholder="Search" className="w-full min-w-0 text-[8px] outline-none placeholder:text-[#bcbcc0]" />
              </label>
              <button aria-label="Solution Park">
                <svg viewBox="0 0 9 10" className="h-[10px] w-[9px]" aria-hidden="true"><path d="M1 0h8v9H2L0 10z" fill="#2b0838" /><path d="M4.500 1.500 8 3.500 6.500 7l-3 .5L2 5z" fill="#a31fc4" /><circle cx="5" cy="4.500" r=".8" fill="#2b0838" /><path d="M0 10V8l2 1z" fill="#bbb" /></svg>
              </button>
            </div>
            <div className="mr-1 flex flex-1 flex-col border border-t-[#dcdde2] border-r-0 border-b-0 border-l-[#e3e4e9] bg-[#edeff4]">
              <div className="flex flex-1">
                <ul className="flex-1">
                  <li>
                    <button className="flex h-[11px] items-center gap-[3px] pl-[2px] text-[8px] text-[#285a92]">
                      <svg viewBox="0 0 4 6" className="h-[6px] w-1" fill="none" stroke="#444" aria-hidden="true"><path d="m1 .8 2.200 2.200L1 5.200" /></svg>
                      Basic Mind Maps
                    </button>
                  </li>
                </ul>
                <div className="w-1 bg-[#fafafa]" />
              </div>
              <div className="flex h-[7px] items-center bg-[#fafafa] px-px"><div className="h-1 w-4/5 rounded-full bg-[#c1c1c2]" /></div>
            </div>
            <label className="flex h-[19px] items-center gap-1 text-[8px] text-[#333]">
              <input type="checkbox" className="size-2 appearance-none rounded-[2px] bg-white shadow-[0_0_1px_rgba(0,0,0,0.25)]" />
              Only Installed Solutions
            </label>
          </aside>

          <section className="flex flex-1 flex-col bg-[#fafafa]" aria-label="Canvas">
            <div className="flex flex-1">
              <div className="flex-1 border-r border-b border-[#e6e6e6] bg-white" />
              <div className="flex w-[6px] flex-col items-center">
                <div className="basis-1/4" />
                <div className="w-[3px] grow-0 basis-[42%] rounded-full bg-[#c1c1c2]" />
              </div>
            </div>
            <div className="flex h-[6px] items-center justify-center"><div className="h-1 w-2/5 rounded-full bg-[#c1c1c2]" /></div>
          </section>

          <aside className="flex w-[190px] flex-col bg-[#ececec] pt-px">
            <div role="tablist" className="grid h-4 grid-cols-3 border-t border-b border-t-[#c9c9cc] border-b-[#a5a5a8] pl-[2px] text-[8px] text-[#3a3a3c]">
              <button role="tab" aria-selected="true" className="bg-[#a9d0fc] text-[#1478ee]">Filter Map</button>
              <button role="tab" aria-selected="false" className="border-l border-[#9c9c9e] bg-[#f2f2f3]">Data Filter</button>
              <button role="tab" aria-selected="false" className="border-l border-[#9c9c9e] bg-[#f2f2f3]">List Filter</button>
            </div>
            <div className="flex flex-col pr-[10px] pl-1 text-[#222]">
              <h2 className="mt-[3px] font-bold text-black">Filter Text</h2>
              <label className="mt-[7px] ml-[2px] flex h-3 items-center gap-[2px] rounded-[3px] bg-white px-[2px] shadow-[0_0_1px_rgba(0,0,0,0.3)]">
                <svg viewBox="0 0 12 9" className="h-[9px] w-3 shrink-0" fill="none" stroke="#333" strokeWidth="1" aria-hidden="true"><circle cx="3.800" cy="3.800" r="3" /><path d="m6 6 2.300 2.500M8 3.800l1.600 1.600 1.600-1.600" /></svg>
                <input aria-label="Filter text" placeholder="Search" className="w-full min-w-0 text-[8px] outline-none placeholder:text-[#bcbcc0]" />
              </label>
              <fieldset className="mt-3 grid grid-cols-[40px_64px_1fr]">
                <span className="row-span-4 leading-[17px]">Look in:</span>
                <Check label="topics" checked /><Check label="callouts" checked />
                <Check label="notes" checked /><Check label="relations" checked />
                <Check label="hyperlinks" checked /><Check label="boundary" checked />
                <Check label="topic types" checked /><Check label="drawing" checked />
              </fieldset>
              <hr className="mt-[5px] mr-[6px] border-[#d6d6d6]" />
              <h2 className="mt-[5px] font-bold text-black">Filter Topic</h2>
              <fieldset className="mt-[7px] ml-10 grid grid-cols-[64px_1fr]">
                <Check label="notes" /><Check label="callouts" />
                <Check label="hyperlinks" /><Check label="relations" />
              </fieldset>
              <hr className="mt-[3px] mr-[6px] border-[#d6d6d6]" />
              <h2 className="mt-1 font-bold text-black">Filter Icons</h2>
              <div className="mt-1 ml-[10px] grid h-[212px] w-[160px] grid-cols-9 grid-rows-12 bg-[#eeeeee]">
                {filterIcons.map(([name, icon]) => (
                  <button key={name} aria-label={name} title={name} className={`grid place-items-center ${name === "Fax" ? "border border-[#6a74b8] bg-[#f3f4fa]" : ""}`}>
                    {icon}
                  </button>
                ))}
              </div>
              <div className="mt-2 mr-[3px] ml-[10px] grid grid-cols-2 gap-x-[13px] gap-y-[3px]">
                <PanelButton>Add Filter to List</PanelButton>
                <PanelButton>Filter Map</PanelButton>
                <PanelButton disabled>Save Changes</PanelButton>
                <PanelButton>Clear Filter</PanelButton>
              </div>
            </div>
          </aside>
        </div>

        <footer className="flex h-3 items-center border-t border-[#cfcfcf] bg-gradient-to-b from-[#ebebeb] to-[#d9d9d9] pr-4 pl-[5px] text-[#333]">
          <button aria-label="Previous page"><svg viewBox="0 0 4 8" className="h-2 w-1" fill="none" stroke="#aaa" aria-hidden="true"><path d="M3.300 1 .8 4l2.500 3" /></svg></button>
          <button className="ml-[10px] flex items-center gap-2">Page-1 (1/1) <Stepper /></button>
          <button aria-label="Next page" className="ml-[10px]"><svg viewBox="0 0 4 8" className="h-2 w-1" fill="none" stroke="#aaa" aria-hidden="true"><path d="M.7 1 3.200 4 .7 7" /></svg></button>
          <button aria-label="Toggle snapping" className="ml-auto"><svg viewBox="0 0 10 9" className="h-[9px] w-[10px]" fill="none" aria-hidden="true"><path d="M3.500 4.500 6 2l2 3-2 2.500z" fill="#9a7565" /><path d="m.8.8 8 7.500" stroke="#e08a68" strokeWidth="1.100" /></svg></button>
          <button className="ml-2 flex items-center gap-[2px]">100% <Stepper /></button>
          <input type="range" aria-label="Zoom" min="0" max="100" defaultValue="50" className="ml-2 h-[9px] w-[60px] appearance-none bg-transparent [&::-webkit-slider-runnable-track]:h-[2px] [&::-webkit-slider-runnable-track]:rounded-full [&::-webkit-slider-runnable-track]:bg-[linear-gradient(90deg,#2381ea_50%,#cacaca_50%)] [&::-webkit-slider-thumb]:-mt-[3px] [&::-webkit-slider-thumb]:size-2 [&::-webkit-slider-thumb]:appearance-none [&::-webkit-slider-thumb]:rounded-full [&::-webkit-slider-thumb]:bg-white [&::-webkit-slider-thumb]:shadow-[0_0_2px_rgba(0,0,0,0.4)]" />
          <button aria-label="Fit page" className="ml-2"><svg viewBox="0 0 9 7" className="h-[7px] w-[9px]" aria-hidden="true"><path d="M0 0h9v7H0z" fill="#77797c" /><path d="M1.200 2h6.600v3H1.200z" fill="#b8b9bb" /></svg></button>
        </footer>
      </main>
    </div>
  );
}
